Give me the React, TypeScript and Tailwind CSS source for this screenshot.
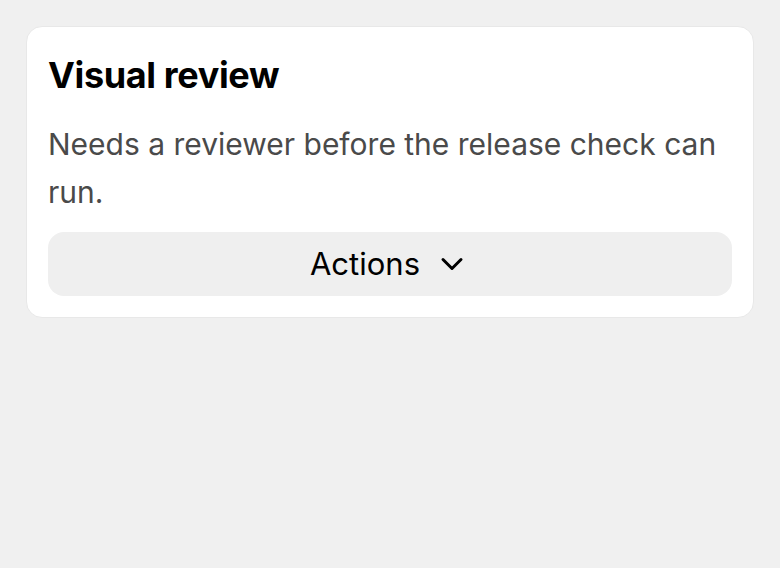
import { ChevronDown } from "lucide-react";

export default function App() {
  return (
    <div className="min-h-screen bg-[#f0f0f0] p-[26px] font-['Inter',sans-serif]">
      <div className="flex flex-col rounded-2xl border border-[#e8e8e8] bg-white p-[21px]">
        <h2 className="text-[36px] font-bold leading-[54px] tracking-[-0.01em] text-black">
          Visual review
        </h2>
        <p className="mt-[18px] text-[30px] leading-[48px] text-[#4a4a4a]">
          Needs a reviewer before the release check can run.
        </p>
        <button className="mt-[16px] flex h-16 items-center justify-center gap-[14px] rounded-2xl bg-[#efefef] text-[31px] text-black">
          Actions
          <ChevronDown className="h-9 w-9" strokeWidth={2} />
        </button>
      </div>
    </div>
  );
}
